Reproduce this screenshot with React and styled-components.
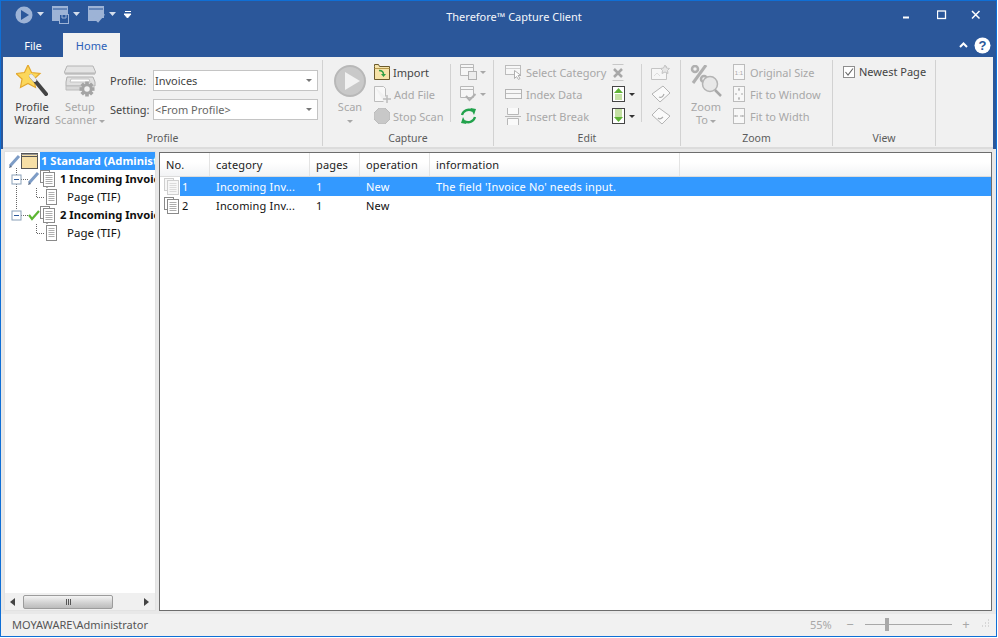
import React from 'react';
import styled, { createGlobalStyle } from 'styled-components';

const Global = createGlobalStyle`
  html, body { margin: 0; padding: 0; background: #fff; }
  body { font-family: "Noto Sans", "Liberation Sans", sans-serif; font-size: 11px; }
`;

const Window = styled.div`
  width: 997px; height: 637px; box-sizing: border-box; border: 1px solid #0f6fd6;
  display: flex; flex-direction: column; background: #ececec; overflow: hidden; color: #444;
`;
const Head = styled.div`background: #2b579a; padding: 0 3px 0 2px; display: flex; flex-direction: column;`;
const TitleBar = styled.div`height: 31px; display: flex; align-items: center; color: #fff;`;
const Qat = styled.div`width: 441px; flex: none; display: flex; align-items: center; padding-left: 12px; box-sizing: border-box; gap: 4px; margin-top: -4px;`;
const Title = styled.div`width: 140px; flex: none; font-size: 11px; text-align: center; color: #f4f6fb;`;
const WinButtons = styled.div`margin-left: auto; display: flex; align-items: center;`;
const WinButton = styled.div`width: 34px; height: 24px; display: flex; align-items: center; justify-content: center; margin-top: -3px;`;
const TabRow = styled.div`height: 25px; display: flex; align-items: flex-end;`;
const Tab = styled.div`
  width: ${p => p.$w}px; height: 24px; display: flex; align-items: center; justify-content: center;
  font-size: 11px; background: ${p => p.$on ? '#f1f1f1' : 'transparent'}; color: ${p => p.$on ? '#2b5fb8' : '#fff'};
`;
const TabRight = styled.div`margin-left: auto; display: flex; align-items: center; gap: 6px; height: 24px; padding-right: 2px;`;
const Ribbon = styled.div`height: 92px; box-sizing: border-box; background: #f1f1f1; border-bottom: 2px solid #dcdcdc; display: flex; padding-top: 3px;`;
const Group = styled.div`
  width: ${p => p.$w}px; flex: none; box-sizing: border-box; height: 86px; border-right: 1px solid #d2d2d2;
  display: flex; flex-direction: column;
`;
const GroupBody = styled.div`height: 70px; display: flex; padding-left: ${p => p.$pl || 0}px; flex: none;`;
const GroupLabel = styled.div`height: 16px; line-height: 16px; text-align: center; color: #5c5c5c; font-size: 10.5px;`;
const Big = styled.div`
  width: ${p => p.$w}px; flex: none; display: flex; flex-direction: column; align-items: center; padding-top: 5px;
  margin-right: ${p => p.$mr || 0}px; color: ${p => p.$off ? '#a8a8a8' : '#444'}; line-height: 13px; font-size: 11px; text-align: center;
`;
const BigText = styled.div`margin-top: 3px; white-space: nowrap;`;
const Drop = styled.span`
  display: inline-block; width: 0; height: 0; vertical-align: middle; margin-left: ${p => p.$ml ?? 2}px;
  border-left: 3px solid transparent; border-right: 3px solid transparent; border-top: 3px solid ${p => p.$c || '#a8a8a8'};
`;
const Col = styled.div`
  display: flex; flex-direction: column; padding-top: 1px; width: ${p => p.$w}px; flex: none;
  margin-right: ${p => p.$mr || 0}px;
`;
const SmallRow = styled.div`
  height: 22px; display: flex; align-items: center; gap: ${p => p.$gap ?? 3}px; white-space: nowrap;
  color: ${p => p.$off ? '#a8a8a8' : '#444'}; font-size: 11px;
`;
const Fields = styled.div`display: flex; flex-direction: column; padding-top: 10px; gap: 8px;`;
const Field = styled.div`display: flex; align-items: center; height: 21px;`;
const FieldLabel = styled.div`width: 43px; color: #444;`;
const Select = styled.div`
  width: 165px; height: 21px; box-sizing: border-box; border: 1px solid #c4c4c4; background: #fff;
  display: flex; align-items: center; justify-content: space-between; padding: 0 5px 0 1px; color: ${p => p.$dim ? '#666' : '#444'};
`;
const VRule = styled.div`width: 1px; height: 58px; margin-top: 4px; background: #d2d2d2; margin-right: ${p => p.$mr}px; flex: none;`;
const CheckRow = styled.div`display: flex; align-items: center; gap: 4px; color: #444; padding-top: 5px; height: 13px;`;
const CheckBox = styled.div`width: 10px; height: 10px; border: 1px solid #8e8e8e; background: #fff; display: flex;`;

const Body = styled.div`flex: 1; min-height: 0; display: flex; padding: 2px 4px 3px 3px; gap: 3px; background: #e8e8e8;`;
const TreePanel = styled.div`width: 152px; flex: none; box-sizing: border-box; border: 1px solid #e2e2e2; background: #fff; display: flex; flex-direction: column;`;
const Tree = styled.div`flex: 1; overflow: hidden; color: #111;`;
const TreeRow = styled.div`height: 18px; display: flex; align-items: center; white-space: nowrap; font-family: "Noto Sans", sans-serif;`;
const TreeLabel = styled.div`
  height: 18px; line-height: 18px; flex: 1; overflow: hidden; font-weight: ${p => p.$b ? 700 : 400}; font-size: ${p => p.$b ? 11.2 : 11.5}px;
  padding-left: ${p => p.$pl ?? 1}px; background: ${p => p.$sel ? '#3399ff' : 'transparent'}; color: ${p => p.$sel ? '#fff' : '#111'};
`;
const ScrollBar = styled.div`height: 17px; background: #f0f0f0; display: flex; align-items: center; padding: 0 6px 0 5px; box-sizing: border-box;`;
const Thumb = styled.div`
  width: 90px; height: 14px; margin-left: 7px; box-sizing: border-box; border: 1px solid #9c9c9c; border-radius: 2px;
  background: linear-gradient(#f4f4f4, #d0d0d0 60%, #bcbcbc); display: flex; align-items: center; justify-content: center; gap: 1px;
`;
const ScrollSpace = styled.div`flex: 1;`;
const Grip = styled.div`width: 1px; height: 6px; background: #555;`;
const ListPanel = styled.div`flex: 1; box-sizing: border-box; border: 1px solid #6d6d6d; background: #fff; margin: 1px 0 0 0; letter-spacing: .17px;`;
const HeaderRow = styled.div`
  height: 24px; display: grid; grid-template-columns: 50px 100px 50px 70px 250px 1fr; box-sizing: border-box;
  background: linear-gradient(#fff 40%, #f2f3f5); border-bottom: 1px solid #dcdcdc; color: #222;
`;
const HeaderCell = styled.div`padding-left: 6px; display: flex; align-items: center; border-right: ${p => p.$last ? 0 : '1px solid #e4e4e4'};`;
const Row = styled.div`
  height: 19px; display: grid; grid-template-columns: 20px 30px 100px 50px 70px 1fr; align-items: center; white-space: nowrap;
  color: ${p => p.$sel ? '#fff' : '#111'};
  background: ${p => p.$sel ? 'linear-gradient(to right, transparent 20px, #3399ff 20px)' : 'transparent'};
`;
const RowIcon = styled.div`padding-left: 4px; display: flex;`;
const Cell = styled.div`padding-left: ${p => p.$pl ?? 6}px; overflow: visible;`;
const Status = styled.div`height: 22px; flex: none; box-sizing: border-box; background: #f1f1f1; display: flex; align-items: center; padding: 0 5px 2px 11px; color: #555;`;
const StatusRight = styled.div`margin-left: auto; display: flex; align-items: center; color: #a8a8a8;`;
const Percent = styled.div`width: 35px;`;
const ZoomMark = styled.div`width: 10px; text-align: center; font-size: 13px; line-height: 14px; margin-left: ${p => p.$ml || 0}px;`;
const Track = styled.div`width: 87px; height: 1px; background: #a8a8a8; position: relative; margin-left: 10px;`;
const TrackThumb = styled.div`position: absolute; left: 20px; top: -6px; width: 4px; height: 13px; background: #a8a8a8;`;
const SizeGrip = styled.svg`display: block; flex: none; margin-left: 8px;`;

const Svg = styled.svg`display: block; flex: none;`;

const Tri = ({ d = 'r' }) => (
  <Svg width="6" height="8" viewBox="0 0 6 8">
    <path d={d === 'l' ? 'M5 0L0 4l5 4z' : 'M1 0l5 4-5 4z'} fill="#444" />
  </Svg>
);
const QatDropSvg = styled(Svg)`margin-right: 3px;`;
const QatDrop = () => <QatDropSvg width="8" height="5" viewBox="0 0 8 5"><path d="M0 0h7L3.500 4z" fill="#d5deec" /></QatDropSvg>;

const QatPlay = () => (
  <Svg width="18" height="18" viewBox="0 0 18 18"><circle cx="9" cy="9" r="8.500" fill="#9db3d6" /><path d="M6 4l8 5-8 5z" fill="#2b579a" /></Svg>
);
const QatSave = () => (
  <Svg width="17" height="18" viewBox="0 0 17 18">
    <path d="M0 0h16v12H9v3H0z" fill="#9db3d6" /><path d="M1 3h14" stroke="#2b579a" />
    <rect x="7.500" y="8.500" width="9" height="9" fill="#2b579a" stroke="#9db3d6" /><path d="M10 9v3h4V9" stroke="#9db3d6" fill="none" />
  </Svg>
);
const QatCheck = () => (
  <Svg width="17" height="18" viewBox="0 0 17 18">
    <path d="M0 0h16v12h-4l-3 3H0z" fill="#9db3d6" /><path d="M1 3h14" stroke="#2b579a" />
    <path d="M6 11l4 4 6-7" stroke="#9db3d6" strokeWidth="2.500" fill="none" />
  </Svg>
);

const Wizard = () => (
  <Svg width="32" height="32" viewBox="0 0 32 32">
    <path d="M12 0l3.500 7.500 8.500 1-6 5.500 1.500 8.500L12 18.500 4.500 22.500 6 14 0 8.500l8.500-1z" fill="#fbd75b" stroke="#e3a72c" strokeWidth="1.200" />
    <path d="M15 11l15 18" stroke="#444" strokeWidth="4" strokeLinecap="round" />
    <path d="M15 11l3.500 4" stroke="#eee" strokeWidth="4" strokeLinecap="round" />
  </Svg>
);
const Gear = ({ x, y, r, c }) => (
  <g transform={`translate(${x} ${y})`}>
    {[0, 45, 90, 135].map(a => <rect key={a} x={-r - 2} y={-1.800} width={2 * r + 4} height={3.600} fill={c} transform={`rotate(${a})`} />)}
    <circle r={r} fill={c} /><circle r={r * 0.500} fill="#f1f1f1" />
  </g>
);
const ScannerIcon = () => (
  <Svg width="32" height="32" viewBox="0 0 32 32">
    <path d="M3 1h26l3 7H0z" fill="#e4e4e4" stroke="#b4b4b4" />
    <path d="M1 9h30" stroke="#a8a8a8" />
    <path d="M3 12h26l2 5v4H2v-4z" fill="#e0e0e0" stroke="#b0b0b0" /><path d="M7 14h18l1 3H6z" fill="#fff" stroke="#c4c4c4" />
    <path d="M2 21h18v4H2z" fill="#d8d8d8" stroke="#bcbcbc" />
    <Gear x={23} y={24} r={5.500} c="#a4a4a4" />
  </Svg>
);
const ScanIcon = () => (
  <Svg width="32" height="32" viewBox="0 0 32 32">
    <circle cx="16" cy="16" r="15" fill="#c9c9c9" stroke="#b8b8b8" strokeWidth="2" /><path d="M11 7l15 9-15 9z" fill="#f2f2f2" />
  </Svg>
);
const ImportIcon = () => (
  <Svg width="16" height="16" viewBox="0 0 16 16">
    <path d="M.5 2.500V.5h4l1 2h10v13H.5z" fill="#f6e3a8" stroke="#6b5a2c" />
    <path d="M.5 4.500h15" stroke="#b89a4c" />
    <path d="M5 6.500c3 0 4.500 1.500 4.500 4" stroke="#2f9e44" strokeWidth="1.500" fill="none" /><path d="M7 10h5l-2.500 3z" fill="#2f9e44" />
  </Svg>
);
const AddFileIcon = () => (
  <Svg width="17" height="17" viewBox="0 0 17 17"><path d="M.5.5h9l2 2v8M.5.5v15h9" stroke="#bcbcbc" fill="#f8f8f8" /><path d="M13 9v8M9 13h8" stroke="#bcbcbc" strokeWidth="1.500" /></Svg>
);
const StopIcon = () => (
  <Svg width="16" height="16" viewBox="0 0 16 16"><path d="M5 0h6l5 5v6l-5 5H5l-5-5V5z" fill="#c8c8c8" stroke="#bbb" /></Svg>
);
const DocSaveIcon = () => (
  <Svg width="17" height="16" viewBox="0 0 17 16">
    <path d="M.5.500h13v11H.5z" fill="#f6f6f6" stroke="#b8b8b8" /><path d="M1 3.500h12" stroke="#b8b8b8" />
    <rect x="8.500" y="7.500" width="8" height="8" fill="#ececec" stroke="#b0b0b0" />
  </Svg>
);
const DocCheckIcon = () => (
  <Svg width="17" height="16" viewBox="0 0 17 16">
    <path d="M.5.500h13v11H.5z" fill="#f6f6f6" stroke="#b8b8b8" /><path d="M1 3.500h12" stroke="#b8b8b8" />
    <path d="M6 10l3.500 4 6-6" stroke="#b0b0b0" strokeWidth="2" fill="none" />
  </Svg>
);
const RefreshIcon = () => (
  <Svg width="17" height="16" viewBox="0 0 17 16">
    <path d="M2 7C3 3 8 0 13 3" stroke="#22a24c" strokeWidth="2.300" fill="none" /><path d="M10.500 0l5.500 1-2 6z" fill="#22a24c" />
    <path d="M15 9c-1 4-6 7-11 4" stroke="#22a24c" strokeWidth="2.300" fill="none" /><path d="M6.500 16l-5.500-1 2-6z" fill="#22a24c" />
  </Svg>
);
const SelCatIcon = () => (
  <Svg width="18" height="16" viewBox="0 0 18 16">
    <rect x=".5" y="1.500" width="15" height="9" fill="#f7f7f7" stroke="#bcbcbc" /><path d="M1 4.500h14" stroke="#d0d0d0" />
    <path d="M9.500 6.500v8l2-2 2 3 1.500-1-2-3h3z" fill="#fff" stroke="#b0b0b0" />
  </Svg>
);
const IndexIcon = () => (
  <Svg width="18" height="14" viewBox="0 0 18 14"><rect x=".5" y="2.500" width="16" height="9" fill="#f7f7f7" stroke="#b4b4b4" /><path d="M1 6.500h15" stroke="#c0c0c0" /></Svg>
);
const BreakIcon = () => (
  <Svg width="18" height="17" viewBox="0 0 18 17"><path d="M2.500 0v6.500h11V0M2.500 17v-6.500h11V17" stroke="#b8b8b8" fill="#fafafa" /><path d="M0 8.500h16" stroke="#b8b8b8" /></Svg>
);
const DeleteIcon = () => (
  <Svg width="12" height="17" viewBox="0 0 12 17">
    <path d="M.5.500h11M.5 16.500h11" stroke="#c8c8c8" /><path d="M2 5l8 8M10 5l-8 8" stroke="#a8a8a8" strokeWidth="2.500" />
  </Svg>
);
const MoveIcon = ({ down }) => (
  <Svg width="13" height="16" viewBox="0 0 13 16">
    <rect x=".5" y=".5" width="12" height="15" fill="#fff" stroke="#444" />
    {down
      ? <g><path d="M3 2h7M3 4h7M3 6h7M3 8h7" stroke="#8bc34a" /><path d="M2 9h9l-4.500 5z" fill="#5fb336" /></g>
      : <g><path d="M2 7h9L6.500 2z" fill="#5fb336" /><path d="M3 9h7M3 11h7M3 13h7" stroke="#8bc34a" /></g>}
  </Svg>
);
const PhotoIcon = () => (
  <Svg width="20" height="16" viewBox="0 0 20 16">
    <path d="M.5 4.500h13l2-2v13H.5z" fill="#f6f6f6" stroke="#c4c4c4" /><path d="M14 1l1.500 3 3 .5-2 2 .5 3-3-1.500-3 1.500.5-3-2-2 3-.5z" fill="#e6e6e6" stroke="#c4c4c4" />
    <path d="M3 12l3-3 3 3" stroke="#ddd" fill="none" />
  </Svg>
);
const RotateIcon = ({ flip }) => (
  <Svg width="20" height="18" viewBox="0 0 20 18">
    {flip
      ? <g><path d="M8 1l11 8-8 8L1 8z" fill="#fafafa" stroke="#b4b4b4" /><path d="M7 11c1 1 3 1 5-1" stroke="#aaa" strokeWidth="1.200" fill="none" /></g>
      : <g><path d="M12 1l7 7-10 9-8-8z" fill="#fafafa" stroke="#b4b4b4" /><path d="M8 12c2 1 4 0 5-3" stroke="#aaa" strokeWidth="1.200" fill="none" /></g>}
  </Svg>
);
const ZoomIcon = () => (
  <Svg width="32" height="32" viewBox="0 0 32 32">
    <circle cx="5" cy="4" r="3" fill="none" stroke="#b0b0b0" strokeWidth="2.500" />
    <path d="M16 0L3 18" stroke="#b0b0b0" strokeWidth="3" />
    <circle cx="14" cy="14" r="3" fill="none" stroke="#b0b0b0" strokeWidth="2.500" />
    <circle cx="20" cy="19" r="7.500" fill="#e8e8e8" stroke="#b4b4b4" strokeWidth="1.500" />
    <path d="M25 25l6 6" stroke="#a8a8a8" strokeWidth="2.500" />
  </Svg>
);
const PageFrame = ({ children }) => (
  <Svg width="13" height="16" viewBox="0 0 13 16"><rect x=".5" y=".5" width="11" height="15" fill="#f8f8f8" stroke="#bcbcbc" />{children}</Svg>
);
const OrigIcon = () => <PageFrame><text x="6" y="10.500" fontSize="6" textAnchor="middle" fill="#a8a8a8" fontFamily="Liberation Sans">1:1</text></PageFrame>;
const FitWinIcon = () => <PageFrame><path d="M6 3v2M6 11v2M2 8h2M8 8h2" stroke="#a8a8a8" /><path d="M5 3h2M5 13h2" stroke="#a8a8a8" /></PageFrame>;
const FitWidthIcon = () => <PageFrame><path d="M2 8h3M7 8h3" stroke="#a8a8a8" /><path d="M2 7v2M10 7v2" stroke="#a8a8a8" /></PageFrame>;
const Check = () => <Svg width="10" height="10" viewBox="0 0 10 10"><path d="M1.500 5l2.500 3 5-6.500" stroke="#666" strokeWidth="1.100" fill="none" /></Svg>;

const docs = (x, y, c = '#8a8a8a', fill = '#fff') => (
  <g transform={`translate(${x} ${y})`}>
    <rect x=".5" y=".5" width="9" height="12" fill={fill} stroke={c} />
    <rect x="3.500" y="2.500" width="11" height="14" fill={fill} stroke={c} />
    <path d="M5.500 5.500h7M5.500 7.500h7M5.500 9.500h7M5.500 11.500h7M5.500 13.500h7" stroke={c} strokeWidth=".7" />
  </g>
);
const page = (x, y) => (
  <g transform={`translate(${x} ${y})`}>
    <rect x=".5" y=".5" width="10" height="15" fill="#fff" stroke="#8a8a8a" />
    <path d="M2.500 3.500h6M2.500 5.500h6M2.500 7.500h6M2.500 9.500h6M2.500 11.500h6" stroke="#9a9a9a" strokeWidth=".8" />
  </g>
);
const pencil = (x, y) => (
  <g transform={`translate(${x} ${y})`}>
    <path d="M1 11L10 1" stroke="#7d9cc6" strokeWidth="3" /><path d="M0 13l1-3 2 2z" fill="#5c6d85" />
  </g>
);
const dots = d => <path d={d} stroke="#666" strokeDasharray="1 1" fill="none" />;
const minus = (cx, cy) => (
  <g><rect x={cx - 4.500} y={cy - 4.500} width="9" height="9" fill="#fff" stroke="#8aa0b8" /><path d={`M${cx - 2.500} ${cy}h5`} stroke="#2b579a" strokeWidth="1" /></g>
);

const TreeRoot = () => (
  <Svg width="35" height="18" viewBox="0 0 35 18">
    {pencil(4, 3)}
    <rect x="16.500" y="1.500" width="16" height="15" fill="#f6dfa6" stroke="#555" />
    <path d="M16.500 4.500h16" stroke="#555" /><path d="M16.500 2.500h16" stroke="#999" />
    {dots('M11.500 16V18')}
  </Svg>
);
const TreeBranch = ({ mark, last }) => (
  <Svg width="54" height="18" viewBox="0 0 54 18">
    {dots(last ? 'M11.500 0V4' : 'M11.500 0V18')}
    {dots('M16 9.500H24')}
    {minus(11.500, 9.500)}
    {mark === 'pencil' ? pencil(23, 2) : <path d="M24 9l3 4 7-8" stroke="#5cb531" strokeWidth="2.200" fill="none" />}
    {docs(35, 0)}
    {dots('M42 17V18')}
  </Svg>
);
const TreeLeaf = ({ cont }) => (
  <Svg width="61" height="18" viewBox="0 0 61 18">
    {cont && dots('M11.500 0V18')}
    {dots('M31.500 0V9.500H40')}
    {page(41, 1)}
  </Svg>
);

const Help = () => (
  <Svg width="17" height="17" viewBox="0 0 17 17">
    <circle cx="8.500" cy="8.500" r="8" fill="#fff" />
    <text x="8.500" y="13" fontSize="13" fontWeight="700" fontFamily="Liberation Sans" textAnchor="middle" fill="#2b579a">?</text>
  </Svg>
);

export default function App() {
  return (
    <Window>
      <Global />
      <Head>
        <TitleBar>
          <Qat>
            <QatPlay /><QatDrop />
            <QatSave /><QatDrop />
            <QatCheck /><QatDrop />
            <Svg width="8" height="8" viewBox="0 0 8 8"><path d="M1 .5h6M0 3h7L3.500 7z" stroke="#fff" fill="#fff" strokeWidth="1" /></Svg>
          </Qat>
          <Title>Therefore™ Capture Client</Title>
          <WinButtons>
            <WinButton><Svg width="10" height="10" viewBox="0 0 10 10"><path d="M0 7.500h6" stroke="#fff" strokeWidth="2" /></Svg></WinButton>
            <WinButton><Svg width="10" height="10" viewBox="0 0 10 10"><rect x=".5" y="1" width="8" height="7.500" fill="none" stroke="#fff" strokeWidth="1.300" /></Svg></WinButton>
            <WinButton><Svg width="10" height="10" viewBox="0 0 10 10"><path d="M1 1l7.500 7.500M8.500 1L1 8.500" stroke="#fff" strokeWidth="1.500" /></Svg></WinButton>
          </WinButtons>
        </TitleBar>
        <TabRow>
          <Tab $w={60}>File</Tab>
          <Tab $w={57} $on>Home</Tab>
          <TabRight>
            <Svg width="9" height="6" viewBox="0 0 9 6"><path d="M1 5l3.500-3.500L8 5" stroke="#fff" strokeWidth="2" fill="none" /></Svg>
            <Help />
          </TabRight>
        </TabRow>
        <Ribbon>
          <Group $w={320}>
            <GroupBody $pl={5}>
              <Big $w={48}><Wizard /><BigText>Profile<br />Wizard</BigText></Big>
              <Big $w={48} $mr={6} $off><ScannerIcon /><BigText>Setup<br />Scanner<Drop /></BigText></Big>
              <Fields>
                <Field><FieldLabel>Profile:</FieldLabel><Select>Invoices<Drop $c="#777" /></Select></Field>
                <Field><FieldLabel>Setting:</FieldLabel><Select $dim>&lt;From Profile&gt;<Drop $c="#777" /></Select></Field>
              </Fields>
            </GroupBody>
            <GroupLabel>Profile</GroupLabel>
          </Group>
          <Group $w={171}>
            <GroupBody $pl={7}>
              <Big $w={40} $mr={4} $off><ScanIcon /><BigText>Scan<br /><Drop $ml={0} /></BigText></Big>
              <Col $w={76}>
                <SmallRow><ImportIcon />Import</SmallRow>
                <SmallRow $off><AddFileIcon />Add File</SmallRow>
                <SmallRow $off $gap={3}><StopIcon />Stop Scan</SmallRow>
              </Col>
              <VRule $mr={9} />
              <Col $w={30}>
                <SmallRow $off><DocSaveIcon /><Drop $ml={0} /></SmallRow>
                <SmallRow $off><DocCheckIcon /><Drop $ml={0} /></SmallRow>
                <SmallRow><RefreshIcon /></SmallRow>
              </Col>
            </GroupBody>
            <GroupLabel>Capture</GroupLabel>
          </Group>
          <Group $w={187}>
            <GroupBody $pl={11}>
              <Col $w={107}>
                <SmallRow $off><SelCatIcon />Select Category</SmallRow>
                <SmallRow $off><IndexIcon />Index Data</SmallRow>
                <SmallRow $off><BreakIcon />Insert Break</SmallRow>
              </Col>
              <Col $w={29}>
                <SmallRow $off><DeleteIcon /></SmallRow>
                <SmallRow $gap={4}><MoveIcon /><Drop $ml={0} $c="#333" /></SmallRow>
                <SmallRow $gap={4}><MoveIcon down /><Drop $ml={0} $c="#333" /></SmallRow>
              </Col>
              <VRule $mr={9} />
              <Col $w={24}>
                <SmallRow><PhotoIcon /></SmallRow>
                <SmallRow><RotateIcon /></SmallRow>
                <SmallRow><RotateIcon flip /></SmallRow>
              </Col>
            </GroupBody>
            <GroupLabel>Edit</GroupLabel>
          </Group>
          <Group $w={152}>
            <GroupBody $pl={9}>
              <Big $w={32} $mr={11} $off><ZoomIcon /><BigText>Zoom<br />To<Drop /></BigText></Big>
              <Col $w={95}>
                <SmallRow $off $gap={4}><OrigIcon />Original Size</SmallRow>
                <SmallRow $off $gap={4}><FitWinIcon />Fit to Window</SmallRow>
                <SmallRow $off $gap={4}><FitWidthIcon />Fit to Width</SmallRow>
              </Col>
            </GroupBody>
            <GroupLabel>Zoom</GroupLabel>
          </Group>
          <Group $w={103}>
            <GroupBody $pl={10}>
              <CheckRow><CheckBox><Check /></CheckBox>Newest Page</CheckRow>
            </GroupBody>
            <GroupLabel>View</GroupLabel>
          </Group>
        </Ribbon>
      </Head>
      <Body>
        <TreePanel>
          <Tree>
            <TreeRow><TreeRoot /><TreeLabel $b $sel>1 Standard (Administrator)</TreeLabel></TreeRow>
            <TreeRow><TreeBranch mark="pencil" /><TreeLabel $b>1 Incoming Invoice</TreeLabel></TreeRow>
            <TreeRow><TreeLeaf cont /><TreeLabel>Page (TIF)</TreeLabel></TreeRow>
            <TreeRow><TreeBranch mark="check" last /><TreeLabel $b>2 Incoming Invoice</TreeLabel></TreeRow>
            <TreeRow><TreeLeaf /><TreeLabel>Page (TIF)</TreeLabel></TreeRow>
          </Tree>
          <ScrollBar>
            <Tri d="l" />
            <Thumb><Grip /><Grip /><Grip /></Thumb>
            <ScrollSpace />
            <Tri />
          </ScrollBar>
        </TreePanel>
        <ListPanel>
          <HeaderRow>
            <HeaderCell>No.</HeaderCell>
            <HeaderCell>category</HeaderCell>
            <HeaderCell>pages</HeaderCell>
            <HeaderCell>operation</HeaderCell>
            <HeaderCell>information</HeaderCell>
            <HeaderCell $last />
          </HeaderRow>
          <Row $sel>
            <RowIcon><Svg width="16" height="17" viewBox="0 0 16 17">{docs(0, 0, '#cfcfcf', '#f7f7f7')}</Svg></RowIcon>
            <Cell $pl={2}>1</Cell><Cell>Incoming Inv...</Cell><Cell>1</Cell><Cell>New</Cell>
            <Cell>The field 'Invoice No' needs input.</Cell>
          </Row>
          <Row>
            <RowIcon><Svg width="16" height="17" viewBox="0 0 16 17">{docs(0, 0)}</Svg></RowIcon>
            <Cell $pl={2}>2</Cell><Cell>Incoming Inv...</Cell><Cell>1</Cell><Cell>New</Cell><Cell />
          </Row>
        </ListPanel>
      </Body>
      <Status>
        MOYAWARE\Administrator
        <StatusRight>
          <Percent>55%</Percent>
          <ZoomMark>−</ZoomMark>
          <Track><TrackThumb /></Track>
          <ZoomMark $ml={9}>+</ZoomMark>
          <SizeGrip width="12" height="10" viewBox="0 0 12 10"><path d="M9 1h1M9 4h1M6 4h1M9 7h1M6 7h1M3 7h1" stroke="#bbb" /></SizeGrip>
        </StatusRight>
      </Status>
    </Window>
  );
}
